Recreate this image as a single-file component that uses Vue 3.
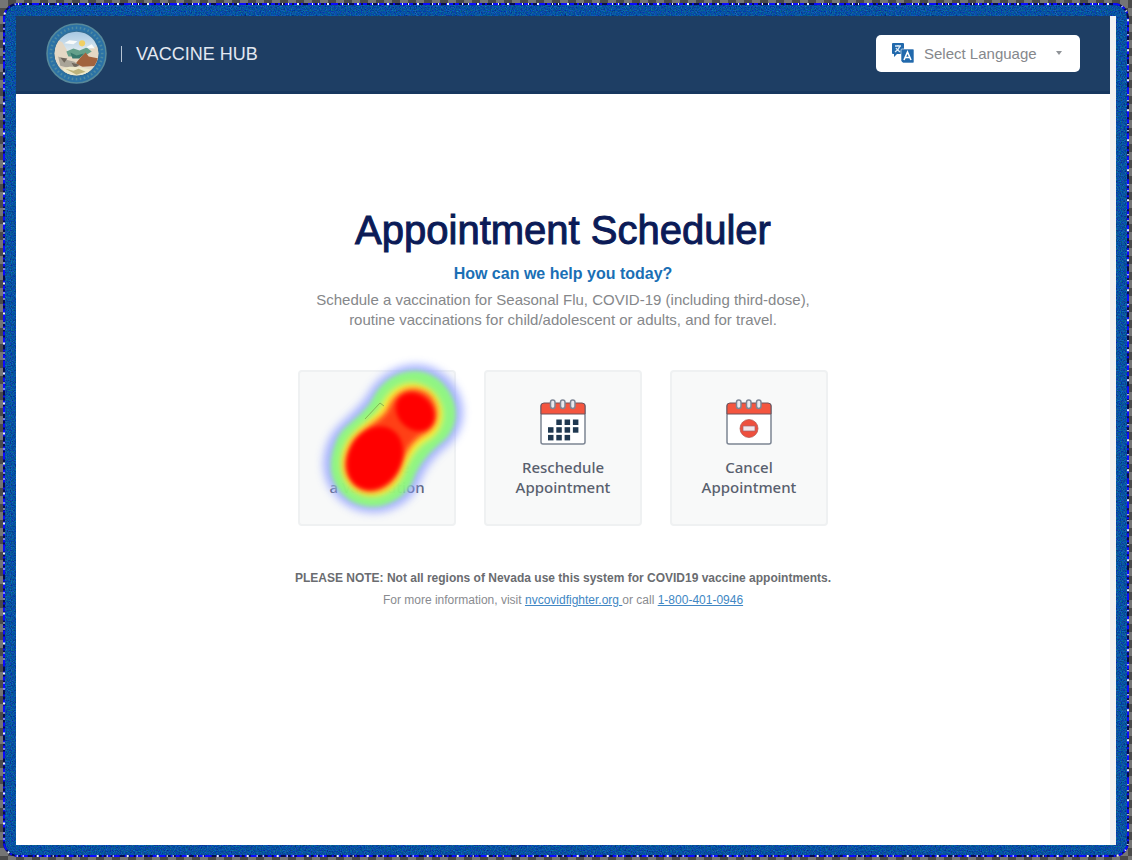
<script setup>
import { ref } from 'vue'

const language = ref('')
const days = [
  [1, 0], [2, 0], [3, 0],
  [0, 1], [1, 1], [2, 1], [3, 1],
  [0, 2], [1, 2], [2, 2],
]
const actions = [
  { id: 'schedule', lines: ['Schedule', 'a Vaccination'] },
  { id: 'reschedule', lines: ['Reschedule', 'Appointment'] },
  { id: 'cancel', lines: ['Cancel', 'Appointment'] },
]
const ticks = Array.from({ length: 40 }, (_, i) => i * 9)
</script>

<template>
  <div class="backdrop">
    <div class="frame">
      <svg class="grain" aria-hidden="true">
        <filter id="speckle" x="0" y="0" width="100%" height="100%" color-interpolation-filters="sRGB">
          <feTurbulence type="fractalNoise" baseFrequency="0.8" numOctaves="2" seed="4" />
          <feColorMatrix values="0.3 0 0 0 -0.12  0 0.5 0 0 0.07  0 0 0.5 0 0.38  0 0 0 0 1" />
        </filter>
        <rect width="100%" height="100%" filter="url(#speckle)" />
      </svg>
      <svg class="edge" aria-hidden="true">
        <rect class="edge-dark" width="100%" height="100%" rx="14" />
        <rect class="edge-blue" width="100%" height="100%" rx="14" />
        <rect class="edge-light" width="100%" height="100%" rx="14" />
      </svg>
      <div class="page">
        <header class="header">
          <div class="brand">
            <svg class="seal" viewBox="0 0 60 60" aria-hidden="true">
              <defs>
                <clipPath id="scene"><circle cx="30" cy="30" r="21.500" /></clipPath>
                <linearGradient id="sky" x1="0" y1="0" x2="0" y2="1">
                  <stop offset="0" stop-color="#8fb9de" />
                  <stop offset=".5" stop-color="#e5eef0" />
                </linearGradient>
              </defs>
              <circle cx="30" cy="30" r="29" fill="#2b72a6" stroke="#57899b" stroke-width="1.500" />
              <g stroke="#4f8ba3" stroke-width="1.500">
                <line v-for="t in ticks" :key="t" x1="30" y1="3.500" x2="30" y2="6" :transform="`rotate(${t} 30 30)`" />
              </g>
              <circle cx="30" cy="30" r="22.500" fill="#376e91" />
              <g clip-path="url(#scene)">
                <rect width="60" height="60" fill="url(#sky)" />
                <path d="M8 15l8 4 6 10 8 4 8-5 14-6v34H8z" fill="#e4d8c4" />
                <path d="M20 28l7-3 6 2 7-3 5 4-8 5H22z" fill="#64a08b" />
                <path d="M24 29l6 3 7-2-4 5h-7z" fill="#38796d" />
                <path d="M34 34l5-5 3 4 10 2v7l-16 1-7-3z" fill="#a2633d" />
                <path d="M12 33l7 3 9 2 5 4-8 3-11-3z" fill="#a9a498" />
                <path d="M14 34l7 1-3 4zM25 39l8 2-5 3z" fill="#6f675c" />
                <path d="M16 45c8-4 20-1 29 1l-8 7H23z" fill="#eee9ca" />
                <path d="M19 45l8 2 5-2 7 3-9 3z" fill="#bdb47c" />
                <circle cx="35.500" cy="20" r="3" fill="#f0cf63" />
                <path d="M18 20l5-3 8 1-4 3zM39 24l6-3 3 4z" fill="#f9fbfa" />
              </g>
            </svg>
            <span class="divider" aria-hidden="true"></span>
            <span class="brand-name">VACCINE HUB</span>
          </div>
          <div class="language">
            <svg class="translate" viewBox="0 0 24 22" aria-hidden="true">
              <path d="M2 1h10a1 1 0 0 1 1 1v10H6l-3 3v-3H2a1 1 0 0 1-1-1V2a1 1 0 0 1 1-1z" fill="#2169ac" />
              <path d="M4 4h6M7 3v1M9 4c-1 3-2 4-5 6M5 6c1 2 3 3 4 4" stroke="#dceaf5" stroke-width="1.300" fill="none" />
              <path d="M11 7h11a1 1 0 0 1 1 1v12a1 1 0 0 1-1 1H12l-2-2V8a1 1 0 0 1 1-1z" fill="#2169ac" stroke="#fff" stroke-width=".6" />
              <path d="M13 18l3.500-8 3.500 8M14 15.500h5" stroke="#fff" stroke-width="1.600" fill="none" />
            </svg>
            <select v-model="language" class="language-select" aria-label="Select Language">
              <option value="">Select Language</option>
            </select>
            <svg class="caret" viewBox="0 0 8 6" aria-hidden="true"><path d="M1 1h6L4 5z" fill="#8f9397" /></svg>
          </div>
        </header>

        <main class="main">
          <h1>Appointment Scheduler</h1>
          <h2>How can we help you today?</h2>
          <p class="intro">
            Schedule a vaccination for Seasonal Flu, COVID-19 (including third-dose),<br />
            routine vaccinations for child/adolescent or adults, and for travel.
          </p>

          <div class="cards">
            <div v-for="action in actions" :key="action.id" class="slot">
              <button type="button" class="card">
                <svg class="calendar" viewBox="0 0 46 46" aria-hidden="true">
                  <path v-if="action.id === 'schedule'" d="M12 22l16-17 5 5-16 17-6 1z" fill="#e9e9ee" stroke="#7c8593" stroke-width="1.300" />
                  <template v-else>
                    <rect x="1" y="5" width="44" height="40" rx="2" fill="#fff" stroke="#7c8593" stroke-width="1.500" />
                    <path d="M1 15V7a3 3 0 0 1 3-3h38a3 3 0 0 1 3 3v8z" fill="#f4553f" stroke="#71525b" stroke-width="1" />
                    <g fill="#e9e9ee" stroke="#7d8594" stroke-width="1.500">
                      <rect x="10.500" y="1" width="4.500" height="8.500" rx="2.200" />
                      <rect x="20.500" y="1" width="4.500" height="8.500" rx="2.200" />
                      <rect x="30.500" y="1" width="4.500" height="8.500" rx="2.200" />
                    </g>
                  </template>
                  <template v-if="action.id === 'cancel'">
                    <circle cx="23" cy="29.500" r="9" fill="#ee4f3d" stroke="#ad514c" stroke-width=".7" />
                    <rect x="17" y="27" width="12" height="5" fill="#f1e5ea" stroke="#a06670" stroke-width=".7" />
                  </template>
                  <template v-if="action.id === 'reschedule'">
                    <rect v-for="[c, r] in days" :key="`${c}-${r}`" :x="8 + c * 8.300" :y="20.500 + r * 7.700" width="5.500" height="5.500" fill="#1f3850" />
                  </template>
                </svg>
                <span class="label">
                  <span v-for="line in action.lines" :key="line">{{ line }}</span>
                </span>
              </button>
              <svg v-if="action.id === 'schedule'" class="heat" viewBox="0 0 160 170" aria-hidden="true">
                <defs>
                  <filter id="soft-5" x="-30%" y="-30%" width="160%" height="160%"><feGaussianBlur stdDeviation="4.500" /></filter>
                  <filter id="soft-2" x="-30%" y="-30%" width="160%" height="160%"><feGaussianBlur stdDeviation="2" /></filter>
                  <filter id="soft-3" x="-30%" y="-30%" width="160%" height="160%"><feGaussianBlur stdDeviation="3" /></filter>
                </defs>
                <g opacity=".75" filter="url(#soft-5)">
                  <path d="M15 84C24 66 40 60 54 39C68 12 104 0 128 18C154 36 157 74 131 93C118 104 113 112 107 124C99 153 61 167 34 151C10 136 3 110 15 84z" fill="#8c9cff" />
                </g>
                <path d="M23 84C31 68 46 64 58 45C70 18 102 7 124 24C147 43 147 72 128 87C115 98 108 106 101 120C93 147 61 160 37 146C15 131 12 109 23 84z" fill="#8cff73" opacity=".87" filter="url(#soft-2)" />
                <path d="M31 90C40 72 57 66 67 52C77 27 101 22 118 36C134 51 131 74 116 84C103 91 97 101 91 115C82 141 57 148 39 135C26 124 24 106 31 90z" fill="#fff53c" filter="url(#soft-3)" />
                <path d="M35 93C42 75 62 70 73 55C82 32 101 29 115 39C128 52 125 72 111 79C98 86 92 97 87 112C79 135 57 143 42 132C30 122 28 108 35 93z" fill="#ff4015" filter="url(#soft-3)" />
                <g fill="#f00" filter="url(#soft-2)">
                  <ellipse cx="61" cy="103" rx="26" ry="33" transform="rotate(30 61 103)" />
                  <ellipse cx="101" cy="57" rx="17" ry="21" transform="rotate(-45 101 57)" />
                </g>
                <path d="M51 64l15-16 4 3" fill="none" stroke="#77994a" stroke-width="1" opacity=".7" />
              </svg>
            </div>
          </div>

          <p class="note">PLEASE NOTE: Not all regions of Nevada use this system for COVID19 vaccine appointments.</p>
          <p class="info">
            For more information, visit <a href="#">nvcovidfighter.org </a> or call <a href="#">1-800-401-0946</a>
          </p>
        </main>
      </div>
    </div>
  </div>
</template>

<style>
html,
body {
  background: #000;
}
</style>

<style scoped>
.backdrop {
  box-sizing: border-box;
  min-height: 100vh;
  padding: 4px;
  display: flex;
  background: repeating-conic-gradient(#4a4a4a 0 25%, #757575 0 50%) 0 0 / 16px 16px;
  font-family: "Liberation Sans", Arial, sans-serif;
}
.frame {
  position: relative;
  flex: 1;
  display: flex;
  padding: 12px 12px 11px;
  border-radius: 14px;
  background: #07539f;
}
.grain,
.edge {
  position: absolute;
  inset: 0;
  width: 100%;
  height: 100%;
  border-radius: 14px;
}
.edge {
  overflow: visible;
}
.edge rect {
  fill: none;
  stroke-width: 2;
}
.edge-dark {
  stroke: #060b50;
}
.edge rect.edge-blue {
  stroke: #0b0bff;
  stroke-dasharray: 4 3 2 5 7 2;
}
.edge rect.edge-light {
  stroke: #e9f2ff;
  stroke-dasharray: 1 8 2 13 1 5;
}
.page {
  position: relative;
  flex: 1;
  background: #fff;
  border-right: 6px solid #f1f1f2;
}
.header {
  box-sizing: border-box;
  min-height: 78px;
  padding: 0 30px;
  display: flex;
  align-items: center;
  justify-content: space-between;
  background: #1e3e64;
  border-bottom: 3px solid #17375f;
}
.brand {
  display: flex;
  align-items: center;
}
.seal {
  width: 61px;
  height: 61px;
}
.divider {
  width: 1px;
  height: 16px;
  margin: 0 14px;
  background: #b7c4d3;
}
.brand-name {
  color: #e3e8f1;
  font-size: 18px;
  line-height: 24px;
}
.language {
  position: relative;
  width: 204px;
  height: 37px;
}
.language-select {
  width: 100%;
  height: 100%;
  padding: 0 30px 0 48px;
  border: 0;
  border-radius: 5px;
  background: #fff;
  color: #85878b;
  font-family: inherit;
  font-size: 15px;
  appearance: none;
}
.translate {
  position: absolute;
  left: 15px;
  top: 7px;
  width: 24px;
  height: 22px;
}
.caret {
  position: absolute;
  right: 17px;
  top: 15px;
  width: 8px;
  height: 6px;
}
.main {
  padding: 112px 20px 32px;
  display: flex;
  flex-direction: column;
  align-items: center;
  text-align: center;
}
h1,
h2,
p {
  margin: 0;
}
h1 {
  color: #0b1b57;
  font-size: 40px;
  line-height: 48px;
  font-weight: 400;
  -webkit-text-stroke: 1px #0b1b57;
}
h2 {
  margin-top: 10px;
  color: #1a6fb5;
  font-size: 16px;
  line-height: 20px;
  font-weight: 700;
}
.intro {
  margin-top: 6px;
  color: #85878a;
  font-size: 15px;
  line-height: 20px;
}
.cards {
  margin-top: 40px;
  display: flex;
  gap: 28px;
}
.slot {
  position: relative;
}
.card {
  width: 158px;
  height: 156px;
  padding: 0;
  display: flex;
  flex-direction: column;
  align-items: center;
  justify-content: center;
  gap: 12px;
  border: 2px solid #eff1f2;
  border-radius: 4px;
  background: #f8f9f9;
  color: #58606e;
  font-family: "Noto Sans", sans-serif;
  font-size: 15px;
  line-height: 20px;
  font-weight: 500;
}
.calendar {
  width: 46px;
  height: 46px;
}
.label {
  display: flex;
  flex-direction: column;
}
.heat {
  position: absolute;
  left: 16px;
  top: -15px;
  width: 160px;
  height: 170px;
  overflow: visible;
  pointer-events: none;
}
.note {
  margin-top: 42px;
  color: #6a6c70;
  font-size: 12px;
  line-height: 20px;
  font-weight: 700;
}
.info {
  margin-top: 2px;
  color: #898b8f;
  font-size: 12px;
  line-height: 20px;
}
.info a {
  color: #4187c4;
}
</style>
